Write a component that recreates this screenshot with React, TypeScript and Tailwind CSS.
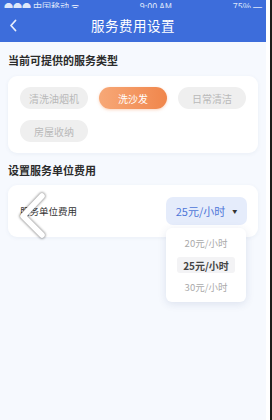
import React from 'react';

const FONT = { fontFamily: '"Noto Sans CJK SC", "Noto Sans", sans-serif' };

const TYPES = [
  { name: '清洗油烟机', active: false },
  { name: '洗沙发', active: true },
  { name: '日常清洁', active: false },
  { name: '房屋收纳', active: false },
];

const PRICES = ['20元/小时', '25元/小时', '30元/小时'];

export default function App() {
  return (
    <div className="flex w-[272px] h-[420px] bg-[#1c1c1c] overflow-hidden" style={FONT}>
      <div className="relative w-[266px] h-full bg-[#f6f9fe] flex flex-col">
        {/* Header */}
        <div className="bg-[#3d6ddb] h-[42px] flex flex-col shrink-0">
          <div className="h-[8px] flex items-end justify-between px-[4px] text-[9px] leading-[9px] text-[#dfe7fa] overflow-hidden">
            <span className="translate-y-[3px]">●●● 中国移动 ᯤ</span>
            <span className="translate-y-[3px]">9:00 AM</span>
            <span className="translate-y-[3px]">75% ▬</span>
          </div>
          <div className="relative flex-1 flex items-center justify-center">
            <svg className="absolute left-[9px] top-[11px]" width="8" height="13" viewBox="0 0 8 13">
              <path d="M6.5 1.5 L2 6.5 L6.5 11.5" fill="none" stroke="#e8eefc" strokeWidth="1.8" strokeLinecap="round" strokeLinejoin="round" />
            </svg>
            <span className="text-white text-[13.5px] tracking-[0.5px] mt-[1px]">服务费用设置</span>
          </div>
        </div>

        {/* Section 1 */}
        <div className="px-[8px]">
          <div className="pt-[11px] pb-[9px] text-[11px] leading-[14px] font-semibold text-[#2b2b2b]">当前可提供的服务类型</div>
          <div className="bg-white rounded-[9px] shadow-[0_1px_4px_rgba(30,60,120,0.06)] px-[12px] py-[11px] grid grid-cols-3 gap-x-[11px] gap-y-[11px]">
            {TYPES.map((t) => (
              <div
                key={t.name}
                className={
                  t.active
                    ? 'h-[22px] rounded-full flex items-center justify-center text-[10px] text-white bg-gradient-to-r from-[#f7a877] to-[#f0864b] shadow-[0_1px_3px_rgba(240,134,75,0.35)]'
                    : 'h-[22px] rounded-full flex items-center justify-center text-[10px] text-[#b9b9b9] bg-[#efefef]'
                }
              >
                {t.name}
              </div>
            ))}
          </div>

          {/* Section 2 */}
          <div className="pt-[10px] pb-[8px] text-[11px] leading-[14px] font-semibold text-[#2b2b2b]">设置服务单位费用</div>
          <div className="relative bg-white rounded-[9px] shadow-[0_1px_4px_rgba(30,60,120,0.06)] h-[52px] pl-[12px] pr-[11px] flex items-center justify-between">
            <span className="text-[9.5px] text-[#333]">服务单位费用</span>
            <div className="h-[28px] w-[81px] rounded-[7px] bg-[#e5ecfb] flex items-center justify-center gap-[7px]">
              <span className="text-[11px] text-[#4e76d8]">25元/小时</span>
              <span className="text-[5px] text-[#333]">▼</span>
            </div>

            {/* Dropdown menu */}
            <div className="absolute right-[12px] top-[43px] w-[80px] bg-white rounded-[6px] shadow-[0_2px_8px_rgba(30,60,120,0.12)] flex flex-col items-center pt-[7px] pb-[7px] gap-[6px] z-10">
              {PRICES.map((p) => (
                <div
                  key={p}
                  className={
                    p === '25元/小时'
                      ? 'w-[58px] h-[16px] rounded-[3px] bg-[#f3f3f5] flex items-center justify-center text-[10px] font-bold text-[#444]'
                      : 'h-[16px] flex items-center justify-center text-[9.5px] text-[#aaa]'
                  }
                >
                  {p}
                </div>
              ))}
            </div>
          </div>
        </div>

        {/* Back-gesture overlay chevron */}
        <svg className="absolute left-[12px] top-[188px]" width="42" height="54" viewBox="0 0 42 54">
          <defs>
            <filter id="sh" x="-50%" y="-50%" width="200%" height="200%">
              <feGaussianBlur stdDeviation="1.2" />
            </filter>
          </defs>
          <path d="M30 8 L11 28 L30 47" fill="none" stroke="rgba(0,0,0,0.4)" strokeWidth="7" strokeLinecap="round" strokeLinejoin="round" filter="url(#sh)" />
          <path d="M30 8 L11 28 L30 47" fill="none" stroke="#ffffff" strokeWidth="5.5" strokeLinecap="round" strokeLinejoin="round" />
        </svg>
      </div>
      <div className="w-[4px] h-full bg-white" />
    </div>
  );
}
